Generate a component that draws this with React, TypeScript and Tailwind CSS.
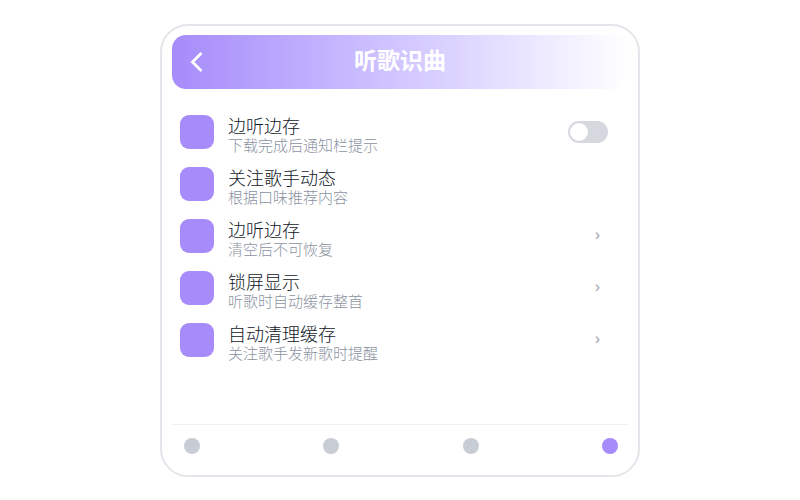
import { useState } from "react";

interface Setting {
  id: string;
  title: string;
  description: string;
  kind: "toggle" | "link" | "plain";
}

const settings: Setting[] = [
  { id: "save", title: "边听边存", description: "下载完成后通知栏提示", kind: "toggle" },
  { id: "follow", title: "关注歌手动态", description: "根据口味推荐内容", kind: "plain" },
  { id: "clear", title: "边听边存", description: "清空后不可恢复", kind: "link" },
  { id: "lock", title: "锁屏显示", description: "听歌时自动缓存整首", kind: "link" },
  { id: "clean", title: "自动清理缓存", description: "关注歌手发新歌时提醒", kind: "link" },
];

const tabs = ["首页", "发现", "歌单", "我的"];

function Header() {
  return (
    <header className="grid h-[54px] grid-cols-[1fr_auto_1fr] items-center rounded-[14px] bg-linear-to-r from-[#a78bfa] to-white px-4">
      <button type="button" aria-label="返回" className="w-fit text-white">
        <svg viewBox="0 0 18 24" className="h-6 w-[18px]" fill="none" stroke="currentColor" strokeWidth="2.8">
          <path d="M13.5 3 4.5 12l9 9" />
        </svg>
      </button>
      <h1 className="pb-[6px] text-[23px] leading-8 font-bold text-white">听歌识曲</h1>
    </header>
  );
}

function SettingRow({ setting }: { setting: Setting }) {
  const [on, setOn] = useState(false);

  return (
    <li className="flex h-[52px] items-center">
      <span className="size-[34px] shrink-0 rounded-[9px] bg-[#a78bfa]" />
      <div className="ml-[14px] min-w-0 flex-1 pt-[6px]">
        {setting.kind === "toggle" ? (
          <label htmlFor={setting.id} className="block text-lg leading-5 font-light text-[#111827]">
            {setting.title}
          </label>
        ) : (
          <h2 className="text-lg leading-5 font-light text-[#111827]">{setting.title}</h2>
        )}
        <p className="text-[15px] leading-5 font-light text-[#8b93a1]">{setting.description}</p>
      </div>
      {setting.kind === "toggle" && (
        <input
          id={setting.id}
          type="checkbox"
          role="switch"
          checked={on}
          onChange={(e) => setOn(e.target.checked)}
          className="h-[22px] w-10 appearance-none rounded-full bg-[#d5d8df] p-[2px] before:block before:size-[18px] before:rounded-full before:bg-white checked:bg-[#a78bfa] checked:before:ml-auto"
        />
      )}
      {setting.kind === "link" && (
        <button type="button" aria-label={setting.title} className="mr-2 pb-[2px] font-['Liberation_Sans',sans-serif] text-base leading-5 text-[#9ca3af]">
          ›
        </button>
      )}
    </li>
  );
}

export default function App() {
  const [active, setActive] = useState(3);

  return (
    <div className="flex min-h-screen justify-center bg-white px-6 pt-6 pb-[23px] font-['Noto_Sans_CJK_SC',sans-serif]">
      <main className="flex w-full max-w-[480px] flex-col rounded-[28px] border-2 border-[#e5e5eb] bg-white px-[10px] py-[9px]">
        <Header />
        <ul className="flex-1 pt-[17px] pr-5 pl-2">
          {settings.map((setting) => (
            <SettingRow key={setting.id} setting={setting} />
          ))}
        </ul>
        <nav className="flex h-[42px] items-center justify-between border-t border-[#f0f0f2] pr-[10px] pl-3">
          {tabs.map((tab, i) => (
            <button
              key={tab}
              type="button"
              aria-label={tab}
              onClick={() => setActive(i)}
              className={i === active ? "size-4 rounded-full bg-[#a78bfa]" : "size-4 rounded-full bg-[#c8ccd4]"}
            />
          ))}
        </nav>
      </main>
    </div>
  );
}
